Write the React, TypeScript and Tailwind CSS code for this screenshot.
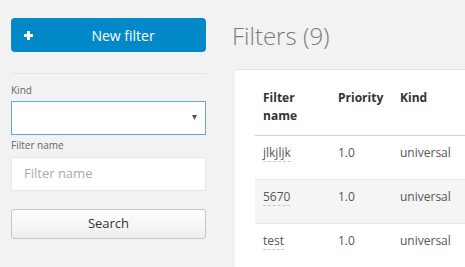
import React from 'react';

const rows = [
  { name: 'jlkjljk', priority: '1.0', kind: 'universal' },
  { name: '5670', priority: '1.0', kind: 'universal' },
  { name: 'test', priority: '1.0', kind: 'universal' },
];

function Sidebar() {
  return (
    <aside className="w-[195px] ml-[11px] pt-[18px] shrink-0">
      <button className="flex items-center w-full h-[34px] rounded-[4px] bg-[#0088c8] text-white">
        <span className="pl-[13px] w-[29px] flex justify-start">
          <svg width="9" height="9" viewBox="0 0 9 9">
            <rect x="3" y="0" width="3" height="9" fill="#fff" />
            <rect x="0" y="3" width="9" height="3" fill="#fff" />
          </svg>
        </span>
        <span className="flex-1 text-center text-[14px]">New filter</span>
      </button>

      <div className="mt-[21px] h-px bg-[#e4e4e4]" />

      <label className="block mt-[9px] text-[10px] leading-[14px] text-[#666]">Kind</label>
      <div className="mt-[4px] relative h-[34px] bg-white border border-[#5eaad6]">
        <svg className="absolute right-[8px] top-[13px]" width="5" height="5" viewBox="0 0 5 5">
          <polygon points="0,0 5,0 2.5,5" fill="#555" />
        </svg>
      </div>

      <label className="block mt-[3px] text-[10px] leading-[14px] text-[#666]">Filter name</label>
      <div className="mt-[5px] h-[34px] bg-white border border-[#e6e6e6] flex items-center pl-[12px] text-[13px] text-[#aaa]">
        Filter name
      </div>

      <button className="mt-[18px] w-full h-[30px] rounded-[3px] border border-[#c6c6c6] bg-gradient-to-b from-white to-[#eeeeee] text-[13px] text-[#333]">
        Search
      </button>
    </aside>
  );
}

export default function App() {
  return (
    <div
      className="w-[465px] h-[267px] overflow-hidden bg-[#f2f2f2] flex"
      style={{ fontFamily: '"Open Sans", "Liberation Sans", sans-serif' }}
    >
      <Sidebar />
      <main className="flex-1 ml-[25px] pt-[19px] min-w-0">
        <h1 className="ml-[1px] text-[24px] leading-[34px] font-light text-[#7a7a7a]">Filters (9)</h1>
        <div className="mt-[16px] ml-[4px] bg-white border-t border-[#e2e2e2] pl-[20px] pt-[8px] h-[300px]">
          <table className="border-collapse text-[12px] w-[260px]">
            <thead>
              <tr className="border-b border-[#cfcfcf]">
                <th className="w-[75px] text-left align-top font-bold text-[#333] leading-[18px] pl-[8px] pr-[8px] pt-[11px] pb-[10px]">Filter name</th>
                <th className="w-[62px] text-left align-top font-bold text-[#333] leading-[18px] pl-[8px] pt-[11px] pb-[10px]">Priority</th>
                <th className="text-left align-top font-bold text-[#333] leading-[18px] pl-[8px] pt-[11px] pb-[10px]">Kind</th>
              </tr>
            </thead>
            <tbody>
              {rows.map((r, i) => (
                <tr key={r.name} className={`border-b border-[#e8e8e8] ${i % 2 === 1 ? 'bg-[#f5f5f5]' : ''}`}>
                  <td className="pl-[8px] pt-[7px] pb-[16px] align-top leading-[20px] text-[#555]">
                    <span className="border-b border-dashed border-[#c8c8c8]">{r.name}</span>
                  </td>
                  <td className="pl-[8px] pt-[7px] pb-[16px] align-top leading-[20px] text-[#555]">{r.priority}</td>
                  <td className="pl-[8px] pt-[7px] pb-[16px] align-top leading-[20px] text-[#555]">{r.kind}</td>
                </tr>
              ))}
            </tbody>
          </table>
        </div>
      </main>
    </div>
  );
}
